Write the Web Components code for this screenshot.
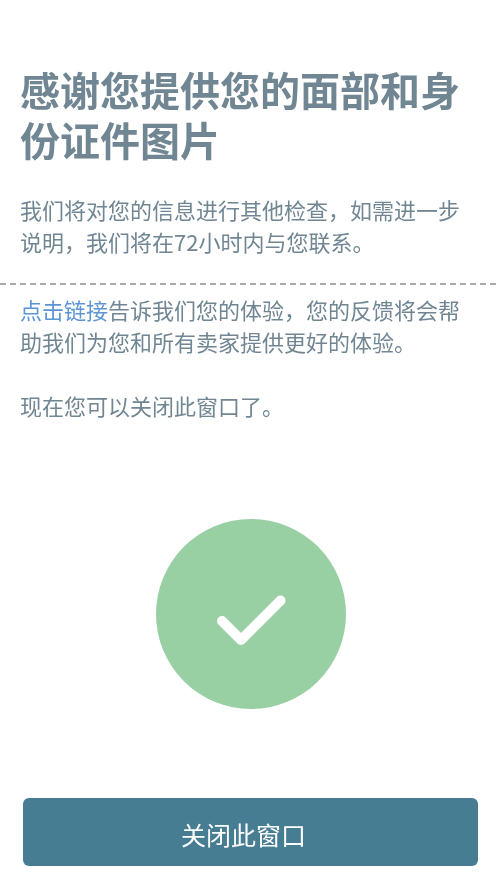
<!DOCTYPE html>
<html lang="zh"><head><meta charset="utf-8"><style>
html,body{margin:0;padding:0;background:#fff}
body{font-family:"Noto Sans CJK SC","Noto Sans",sans-serif}
a{color:#5b95d6;text-decoration:none}
</style></head><body>
<thanks-page>
<info-text slot="top" title-text="感谢您提供您的面部和身份证件图片">
<p>我们将对您的信息进行其他检查&#xFF0C;如需进一步说明&#xFF0C;我们将在72小时内与您联系&#x3002;</p>
</info-text>
<info-text slot="bottom">
<p><a href="#">点击链接</a>告诉我们您的体验&#xFF0C;您的反馈将会帮助我们为您和所有卖家提供更好的体验&#x3002;</p>
<p>现在您可以关闭此窗口了&#x3002;</p>
</info-text>
<success-mark slot="mark"></success-mark>
<action-button slot="action">关闭此窗口</action-button>
</thanks-page>
<script>
function def(name,html,init){customElements.define(name,class extends HTMLElement{constructor(){super();const r=this.attachShadow({mode:'open'});r.innerHTML=html;}connectedCallback(){init&&init(this)}})}
def('thanks-page',`<style>
:host{display:flex;flex-direction:column;width:496px;height:880px;box-sizing:border-box;padding-top:64px;overflow:hidden;background:#fff;filter:blur(.6px)}
.rule{border-top:2px dashed #ababab;margin:26px 0 8px;height:0}
.mark{display:flex;justify-content:center;margin-top:97.500px}
.action{display:block;margin:auto 18px 14px 23px}
</style><slot name="top"></slot><div class="rule"></div><slot name="bottom"></slot><div class="mark"><slot name="mark"></slot></div><div class="action"><slot name="action"></slot></div>`);
def('info-text',`<style>
:host{display:block;padding:0 20px;color:#708693;font-size:20px;line-height:32px}
h1{margin:0 0 29px;font-size:40px;line-height:50px;font-weight:700;color:#708693}
h1:empty{display:none}
::slotted(p){margin:0 0 32px;font-size:22px;line-height:32px}
::slotted(p:last-child){margin-bottom:0}
</style><h1></h1><slot></slot>`,el=>{el.shadowRoot.querySelector('h1').textContent=el.getAttribute('title-text')||''});
def('success-mark',`<style>
:host{display:block;width:190px;height:190px;margin-left:5px}
svg{display:block}
</style><svg width="190" height="190" viewBox="0 0 190 190"><circle cx="95" cy="95" r="95" fill="#98d0a4"/><path d="M66 102 L85 121 L124.500 81.500" fill="none" stroke="#fff" stroke-width="10" stroke-linecap="round" stroke-linejoin="round"/></svg>`);
def('action-button',`<style>
:host{display:flex;align-items:center;justify-content:center;box-sizing:border-box;height:68px;padding:3px 14px 0 0;border-radius:6px;background:#467d93;color:#fff;font-size:25px;cursor:pointer}
</style><slot></slot>`);
</script>
</body></html>
